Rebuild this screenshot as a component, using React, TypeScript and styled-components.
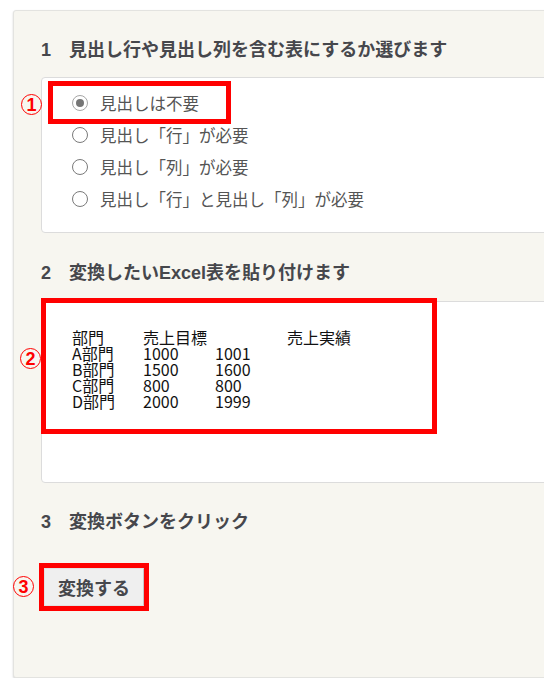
import React from "react";
import styled, { createGlobalStyle, css } from "styled-components";

const Global = createGlobalStyle`
  html, body { margin: 0; padding: 0; background: #ffffff; overflow: hidden; }
  body { font-family: "Liberation Sans", "Noto Sans CJK JP", sans-serif; }
`;

const Page = styled.div`
  padding: 10px 0 0 13px;
  width: 660px;
`;

const Panel = styled.div`
  background: #f7f6f0;
  border: 1px solid #e3e3e0;
  border-radius: 3px;
  box-shadow: 0 1px 2px rgba(0, 0, 0, 0.18);
  padding: 27px 27px 71px 27px;
  display: flex;
  flex-direction: column;
`;

const Heading = styled.h2<{ $gap: number }>`
  margin: ${(p) => p.$gap}px 0 0 0;
  font-family: "Liberation Sans", "Noto Sans CJK JP", sans-serif;
  font-size: 18px;
  font-weight: 700;
  line-height: 24px;
  color: #46474c;
`;

const Anchor = styled.div<{ $gap: number }>`
  position: relative;
  margin-top: ${(p) => p.$gap}px;
`;

const OptionBox = styled.div`
  background: #ffffff;
  border: 1px solid #dcdcdc;
  border-radius: 4px;
  height: 156px;
  padding: 8px 0 0 11px;
  box-sizing: border-box;
  display: flex;
  flex-direction: column;
  align-items: flex-start;
`;

const Option = styled.label<{ $highlight?: boolean }>`
  display: flex;
  align-items: center;
  gap: 12px;
  height: 32px;
  padding: 0 27px 0 19px;
  font-family: "Noto Sans CJK JP", sans-serif;
  font-size: 16.5px;
  color: #555555;
  ${(p) =>
    p.$highlight &&
    css`
      height: 33px;
      outline: 5px solid #ff0000;
    `}
`;

const Radio = styled.span<{ $checked?: boolean }>`
  width: 16px;
  height: 16px;
  box-sizing: border-box;
  border-radius: 50%;
  border: 1.5px solid #7a7a7a;
  background: #ffffff;
  display: flex;
  align-items: center;
  justify-content: center;
  flex-shrink: 0;
  &::after {
    content: "";
    width: 8px;
    height: 8px;
    border-radius: 50%;
    background: ${(p) => (p.$checked ? "#767676" : "transparent")};
  }
  ${(p) => p.$checked && css`border-color: #a6a6a6;`}
`;

const PasteArea = styled.div`
  background: #ffffff;
  border: 1px solid #dcdcdc;
  border-radius: 4px;
  height: 182px;
  padding: 27px 0 0 30px;
  box-sizing: border-box;
`;

const DataGrid = styled.div`
  display: grid;
  grid-template-columns: 71px 72px 72px auto;
  font-family: "Noto Sans CJK JP", sans-serif;
  font-size: 16px;
  font-weight: 400;
  line-height: 16px;
  color: #111111;
  width: 340px;
`;

const Cell = styled.span`
  white-space: nowrap;
  height: 16px;
`;

const Frame = styled.div<{ $w: number; $h: number; $top: number; $left: number }>`
  position: absolute;
  top: ${(p) => p.$top}px;
  left: ${(p) => p.$left}px;
  width: ${(p) => p.$w}px;
  height: ${(p) => p.$h}px;
  border: 5px solid #ff0000;
  box-sizing: border-box;
  pointer-events: none;
`;

const Marker = styled.span<{ $top: number; $left: number }>`
  position: absolute;
  top: ${(p) => p.$top}px;
  left: ${(p) => p.$left}px;
  width: 21px;
  height: 21px;
  box-sizing: border-box;
  border: 1px solid #ff0000;
  border-radius: 50%;
  display: flex;
  align-items: center;
  justify-content: center;
  font-family: "Liberation Sans", sans-serif;
  font-weight: 700;
  font-size: 18px;
  line-height: 1;
  color: #ff0000;
`;

const ConvertButton = styled.button`
  margin-left: 3px;
  width: 100px;
  height: 38px;
  background: #efefef;
  border: 1px solid #e2e2e2;
  border-right-color: #c4c4c4;
  font-family: "Liberation Sans", "Noto Sans CJK JP", sans-serif;
  font-weight: 700;
  font-size: 18px;
  color: #46474c;
  padding: 0;
  outline: 5px solid #ff0000;
`;

const options = [
  "見出しは不要",
  "見出し「行」が必要",
  "見出し「列」が必要",
  "見出し「行」と見出し「列」が必要",
];

const rows: string[][] = [
  ["部門", "売上目標", "", "売上実績"],
  ["A部門", "1000", "1001", ""],
  ["B部門", "1500", "1600", ""],
  ["C部門", "800", "800", ""],
  ["D部門", "2000", "1999", ""],
];

export default function App() {
  return (
    <>
      <Global />
      <Page>
        <Panel>
          <Heading $gap={0}>1　見出し行や見出し列を含む表にするか選びます</Heading>
          <Anchor $gap={15}>
            <Marker $top={17} $left={-20}>1</Marker>
            <OptionBox>
              {options.map((o, i) => (
                <Option key={o} $highlight={i === 0}>
                  <Radio $checked={i === 0} />
                  {o}
                </Option>
              ))}
            </OptionBox>
          </Anchor>

          <Heading $gap={28}>2　変換したいExcel表を貼り付けます</Heading>
          <Anchor $gap={16}>
            <PasteArea>
              <DataGrid>
                {rows.flatMap((r, ri) =>
                  r.map((c, ci) => <Cell key={`${ri}-${ci}`}>{c}</Cell>)
                )}
              </DataGrid>
            </PasteArea>
            <Frame $top={-3} $left={0} $w={396} $h={136} />
            <Marker $top={47} $left={-21}>2</Marker>
          </Anchor>

          <Heading $gap={27}>3　変換ボタンをクリック</Heading>
          <Anchor $gap={34}>
            <Marker $top={8} $left={-28}>3</Marker>
            <ConvertButton>変換する</ConvertButton>
          </Anchor>
        </Panel>
      </Page>
    </>
  );
}
